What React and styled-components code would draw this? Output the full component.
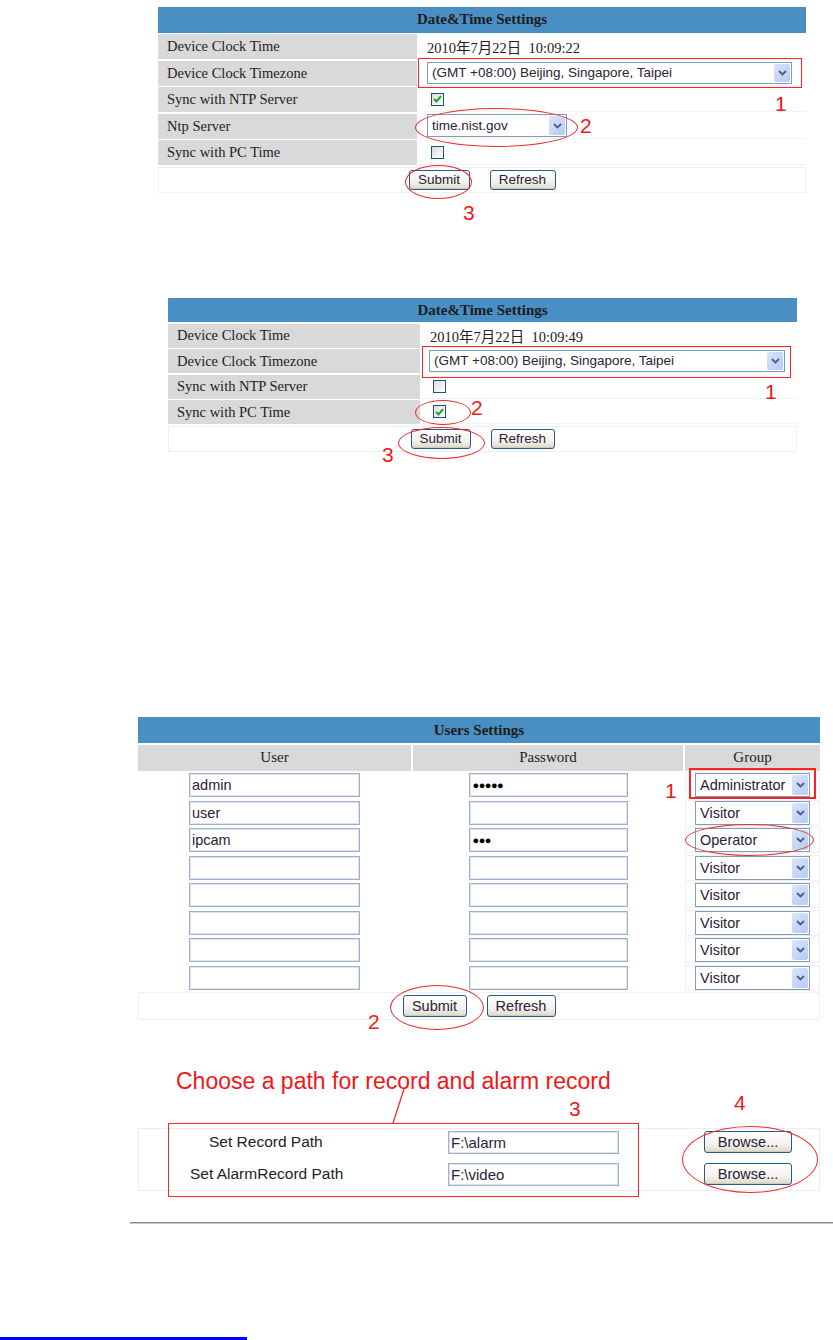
import styled, { createGlobalStyle } from 'styled-components';

const Global = createGlobalStyle`
  html, body { margin: 0; padding: 0; background: #fff; }
  body { font-family: "Liberation Serif", serif; color: #222; }
`;

const serif = `"Liberation Serif", "Noto Sans CJK SC", serif`;
const sans = `"Liberation Sans", Arial, sans-serif`;

export default function App() {
  return (
    <Page>
      <Global />

      {/* first date & time screen: NTP */}
      <Figure $top={7} $left={158} $width={648}>
        <Grid $cols="259px 1fr" $head={25.5}>
          <Head>Date&amp;Time Settings</Head>
          <Label>Device Clock Time</Label>
          <Value>2010年7月22日&nbsp;&nbsp;10:09:22</Value>
          <Label>Device Clock Timezone</Label>
          <Value $pad={8}>
            <Select $w={365} $h={22}>(GMT +08:00) Beijing, Singapore, Taipei</Select>
          </Value>
          <Label>Sync with NTP Server</Label>
          <Value $pad={8}><Check checked /></Value>
          <Label>Ntp Server</Label>
          <Value $pad={8}>
            <Select $w={140} $h={23}>time.nist.gov</Select>
          </Value>
          <Label>Sync with PC Time</Label>
          <Value $pad={8}><Check /></Value>
          <ButtonRow $h={26}>
            <Btn $w={61}>Submit</Btn>
            <Btn $w={66}>Refresh</Btn>
          </ButtonRow>
        </Grid>
        <Mark $x={260} $y={51} $w={384} $h={30} />
        <Num $x={617} $y={86}>1</Num>
        <Mark $x={257} $y={101} $w={163} $h={39} $round />
        <Num $x={422} $y={108}>2</Num>
        <Mark $x={247} $y={158} $w={67} $h={34} $round />
        <Num $x={305} $y={195}>3</Num>
      </Figure>

      {/* second date & time screen: PC time */}
      <Figure $top={106.5} $left={168} $width={629}>
        <Grid $cols="252px 1fr" $head={24} $row={24}>
          <Head>Date&amp;Time Settings</Head>
          <Label>Device Clock Time</Label>
          <Value>2010年7月22日&nbsp;&nbsp;10:09:49</Value>
          <Label>Device Clock Timezone</Label>
          <Value $pad={7}>
            <Select $w={356} $h={22}>(GMT +08:00) Beijing, Singapore, Taipei</Select>
          </Value>
          <Label>Sync with NTP Server</Label>
          <Value $pad={7}><Check /></Value>
          <Label>Sync with PC Time</Label>
          <Value $pad={7}><Check checked /></Value>
          <ButtonRow $h={26}>
            <Btn $w={60}>Submit</Btn>
            <Btn $w={64}>Refresh</Btn>
          </ButtonRow>
        </Grid>
        <Mark $x={254} $y={48} $w={369} $h={32} />
        <Num $x={597} $y={83}>1</Num>
        <Mark $x={247} $y={102} $w={56} $h={25} $round />
        <Num $x={303} $y={99}>2</Num>
        <Mark $x={230} $y={129} $w={87} $h={32} $round />
        <Num $x={214} $y={146}>3</Num>
      </Figure>

      {/* users */}
      <Figure $top={267.5} $left={138} $width={682}>
        <Grid $cols="273px 270px 135px" $head={26} $row={26}>
          <Head>Users Settings</Head>
          <SubHead>User</SubHead>
          <SubHead>Password</SubHead>
          <SubHead>Group</SubHead>
          {users.map((u, i) => (
            <UserRow key={i} {...u} />
          ))}
          <ButtonRow $h={28}>
            <Btn $w={64} $h={22} $size={14.5}>Submit</Btn>
            <Btn $w={69} $h={22} $size={14.5}>Refresh</Btn>
          </ButtonRow>
        </Grid>
        <Mark $x={551} $y={51} $w={127} $h={31} $thick />
        <Num $x={527} $y={63}>1</Num>
        <Mark $x={547} $y={107} $w={129} $h={32} $round />
        <Mark $x={252} $y={268} $w={94} $h={45} $round />
        <Num $x={230} $y={294}>2</Num>
      </Figure>

      {/* record paths */}
      <Figure $top={41.5} $left={137} $width={684}>
        <Caption>Choose a path for record and alarm record</Caption>
        <PathBox>
          <PathRow>
            <PathLabel $indent={70}>Set Record Path</PathLabel>
            <TextBox $w={171} $h={23} $size={15}>F:\alarm</TextBox>
            <Btn $w={88} $h={22} $size={14.5}>Browse...</Btn>
          </PathRow>
          <PathRow>
            <PathLabel $indent={51}>Set AlarmRecord Path</PathLabel>
            <TextBox $w={171} $h={23} $size={15}>F:\video</TextBox>
            <Btn $w={88} $h={22} $size={14.5}>Browse...</Btn>
          </PathRow>
        </PathBox>
        <Pointer width="16" height="36" viewBox="0 0 16 36">
          <line x1="14" y1="1" x2="3" y2="35" stroke="#f03030" strokeWidth="1.3" />
        </Pointer>
        <Mark $x={31} $y={63} $w={471} $h={74} />
        <Num $x={432} $y={38}>3</Num>
        <Num $x={597} $y={32}>4</Num>
        <Mark $x={545} $y={66} $w={136} $h={67} $round />
      </Figure>

      <Rule />
      <LinkBar />
    </Page>
  );
}

const users = [
  { name: 'admin', pass: '●●●●●', group: 'Administrator' },
  { name: 'user', pass: '', group: 'Visitor' },
  { name: 'ipcam', pass: '●●●', group: 'Operator' },
  { name: '', pass: '', group: 'Visitor' },
  { name: '', pass: '', group: 'Visitor' },
  { name: '', pass: '', group: 'Visitor' },
  { name: '', pass: '', group: 'Visitor' },
  { name: '', pass: '', group: 'Visitor' },
];

function UserRow({ name, pass, group }) {
  return (
    <>
      <Cell><TextBox $w={171} $h={24}>{name}</TextBox></Cell>
      <Cell><TextBox $w={159} $h={24} $dots>{pass}</TextBox></Cell>
      <Cell $faint><Select $w={115} $h={24} $size={14.5}>{group}</Select></Cell>
    </>
  );
}

function Select({ children, $w, $h, $size }) {
  return (
    <SelectBox $w={$w} $h={$h} $size={$size}>
      <span>{children}</span>
      <Arrow>
        <svg width="9" height="6" viewBox="0 0 9 6">
          <polyline points="1,1 4.5,4.5 8,1" fill="none" stroke="#4a5e86" strokeWidth="1.8" />
        </svg>
      </Arrow>
    </SelectBox>
  );
}

function Check({ checked }) {
  return (
    <CheckBox>
      {checked && (
        <svg width="9" height="8" viewBox="0 0 9 8">
          <polyline points="1,4 3.5,6.5 8,1.2" fill="none" stroke="#21a121" strokeWidth="2" />
        </svg>
      )}
    </CheckBox>
  );
}

const Page = styled.div`
  width: 833px;
  height: 1340px;
  overflow: hidden;
  display: flex;
  flex-direction: column;
`;

const Figure = styled.div`
  position: relative;
  margin: ${(p) => p.$top}px 0 0 ${(p) => p.$left}px;
  width: ${(p) => p.$width}px;
  flex-shrink: 0;
`;

const Grid = styled.div`
  display: grid;
  grid-template-columns: ${(p) => p.$cols};
  grid-template-rows: ${(p) => p.$head}px;
  grid-auto-rows: ${(p) => p.$row || 25}px;
  row-gap: 1.5px;
  column-gap: 2px;
`;

const Head = styled.div`
  grid-column: 1 / -1;
  background: #4a8fc4;
  display: flex;
  align-items: center;
  justify-content: center;
  font: bold 15px ${serif};
  color: #1c1c1c;
`;

const SubHead = styled.div`
  background: #d9d9d9;
  display: flex;
  align-items: center;
  justify-content: center;
  font: 15px ${serif};
  color: #222;
`;

const Label = styled.div`
  background: #d9d9d9;
  display: flex;
  align-items: center;
  padding-left: 9px;
  font: 14.5px ${serif};
  color: #222;
`;

const Value = styled.div`
  display: flex;
  align-items: center;
  padding-left: ${(p) => p.$pad ?? 8}px;
  border-bottom: 1px solid #f4f4f4;
  font: 14.5px ${serif};
  color: #222;
`;

const Cell = styled.div`
  display: flex;
  align-items: center;
  justify-content: center;
  border: 1px solid ${(p) => (p.$faint ? '#efefef' : 'transparent')};
`;

const ButtonRow = styled.div`
  grid-column: 1 / -1;
  height: ${(p) => p.$h}px;
  display: flex;
  align-items: center;
  justify-content: center;
  gap: 20px;
  border: 1px solid #f0f0f0;
  box-sizing: border-box;
`;

const Btn = styled.button`
  width: ${(p) => p.$w}px;
  height: ${(p) => p.$h || 20}px;
  padding: 0;
  border: 1px solid #2c5a88;
  border-radius: 3px;
  background: linear-gradient(#ffffff, #f3f2ec 60%, #dcd8cc);
  box-shadow: inset 0 -1px 0 #cfcabb;
  font: ${(p) => p.$size || 13.5}px ${sans};
  color: #2a2238;
  cursor: pointer;
`;

const SelectBox = styled.div`
  box-sizing: border-box;
  width: ${(p) => p.$w}px;
  height: ${(p) => p.$h}px;
  display: flex;
  align-items: center;
  justify-content: space-between;
  padding: 1px 1px 1px 4px;
  border: 1px solid #7f9db9;
  background: #fff;
  font: ${(p) => p.$size || 13.5}px ${sans};
  color: #2a2238;
  white-space: nowrap;
`;

const Arrow = styled.span`
  width: 16px;
  height: 100%;
  border-radius: 2px;
  background: linear-gradient(135deg, #dae5fc, #b6caf5);
  display: flex;
  align-items: center;
  justify-content: center;
`;

const CheckBox = styled.span`
  box-sizing: border-box;
  width: 13px;
  height: 13px;
  margin-left: 4px;
  border: 1px solid #1c5180;
  background: linear-gradient(135deg, #dcdcd7, #ffffff);
  display: flex;
  align-items: center;
  justify-content: center;
`;

const TextBox = styled.div`
  box-sizing: border-box;
  width: ${(p) => p.$w}px;
  height: ${(p) => p.$h}px;
  border: 1px solid #9db1cc;
  box-shadow: inset 0 0 0 1px #dbe4ef;
  background: #fff;
  display: flex;
  align-items: center;
  padding-left: ${(p) => (p.$dots ? 3 : 2)}px;
  font: ${(p) => (p.$dots ? 11 : p.$size || 14.5)}px ${sans};
  letter-spacing: ${(p) => (p.$dots ? '-0.5px' : '0')};
  color: ${(p) => (p.$dots ? '#000' : '#2a2238')};
`;

const Caption = styled.div`
  margin: 10px 0 0 39px;
  font: 23px/1 ${sans};
  color: #f01818;
  white-space: nowrap;
`;

const PathBox = styled.div`
  margin: 35px 0 0 1px;
  width: 682px;
  box-sizing: border-box;
  border: 1px solid #ececec;
  padding: 2px 0 4px;
  display: flex;
  flex-direction: column;
  gap: 9px;
`;

const PathRow = styled.div`
  display: flex;
  align-items: center;
  height: 23px;

  & > button {
    margin-left: 85px;
  }
`;

const PathLabel = styled.div`
  width: 309px;
  box-sizing: border-box;
  padding-left: ${(p) => p.$indent}px;
  font: 15.5px ${sans};
  color: #222;
  white-space: nowrap;
`;

const Pointer = styled.svg`
  position: absolute;
  left: 253px;
  top: 28px;
`;

const Mark = styled.div`
  position: absolute;
  left: ${(p) => p.$x}px;
  top: ${(p) => p.$y}px;
  width: ${(p) => p.$w}px;
  height: ${(p) => p.$h}px;
  box-sizing: border-box;
  border: ${(p) =>
    p.$round ? '1.3px solid #ee2a2a' : `${p.$thick ? 2 : 1.6}px solid #f22`};
  border-radius: ${(p) => (p.$round ? '50%' : '0')};
  pointer-events: none;
`;

const Num = styled.span`
  position: absolute;
  left: ${(p) => p.$x}px;
  top: ${(p) => p.$y}px;
  font: 21px/1 ${sans};
  color: #f01818;
`;

const Rule = styled.div`
  margin: 31px 0 0 130px;
  height: 0;
  border-top: 1px solid #8a8a8a;
  border-bottom: 1px solid #c8c8c8;
  flex-shrink: 0;
`;

const LinkBar = styled.div`
  margin-top: 113px;
  width: 247px;
  height: 3px;
  background: #0000ff;
  flex-shrink: 0;
`;
